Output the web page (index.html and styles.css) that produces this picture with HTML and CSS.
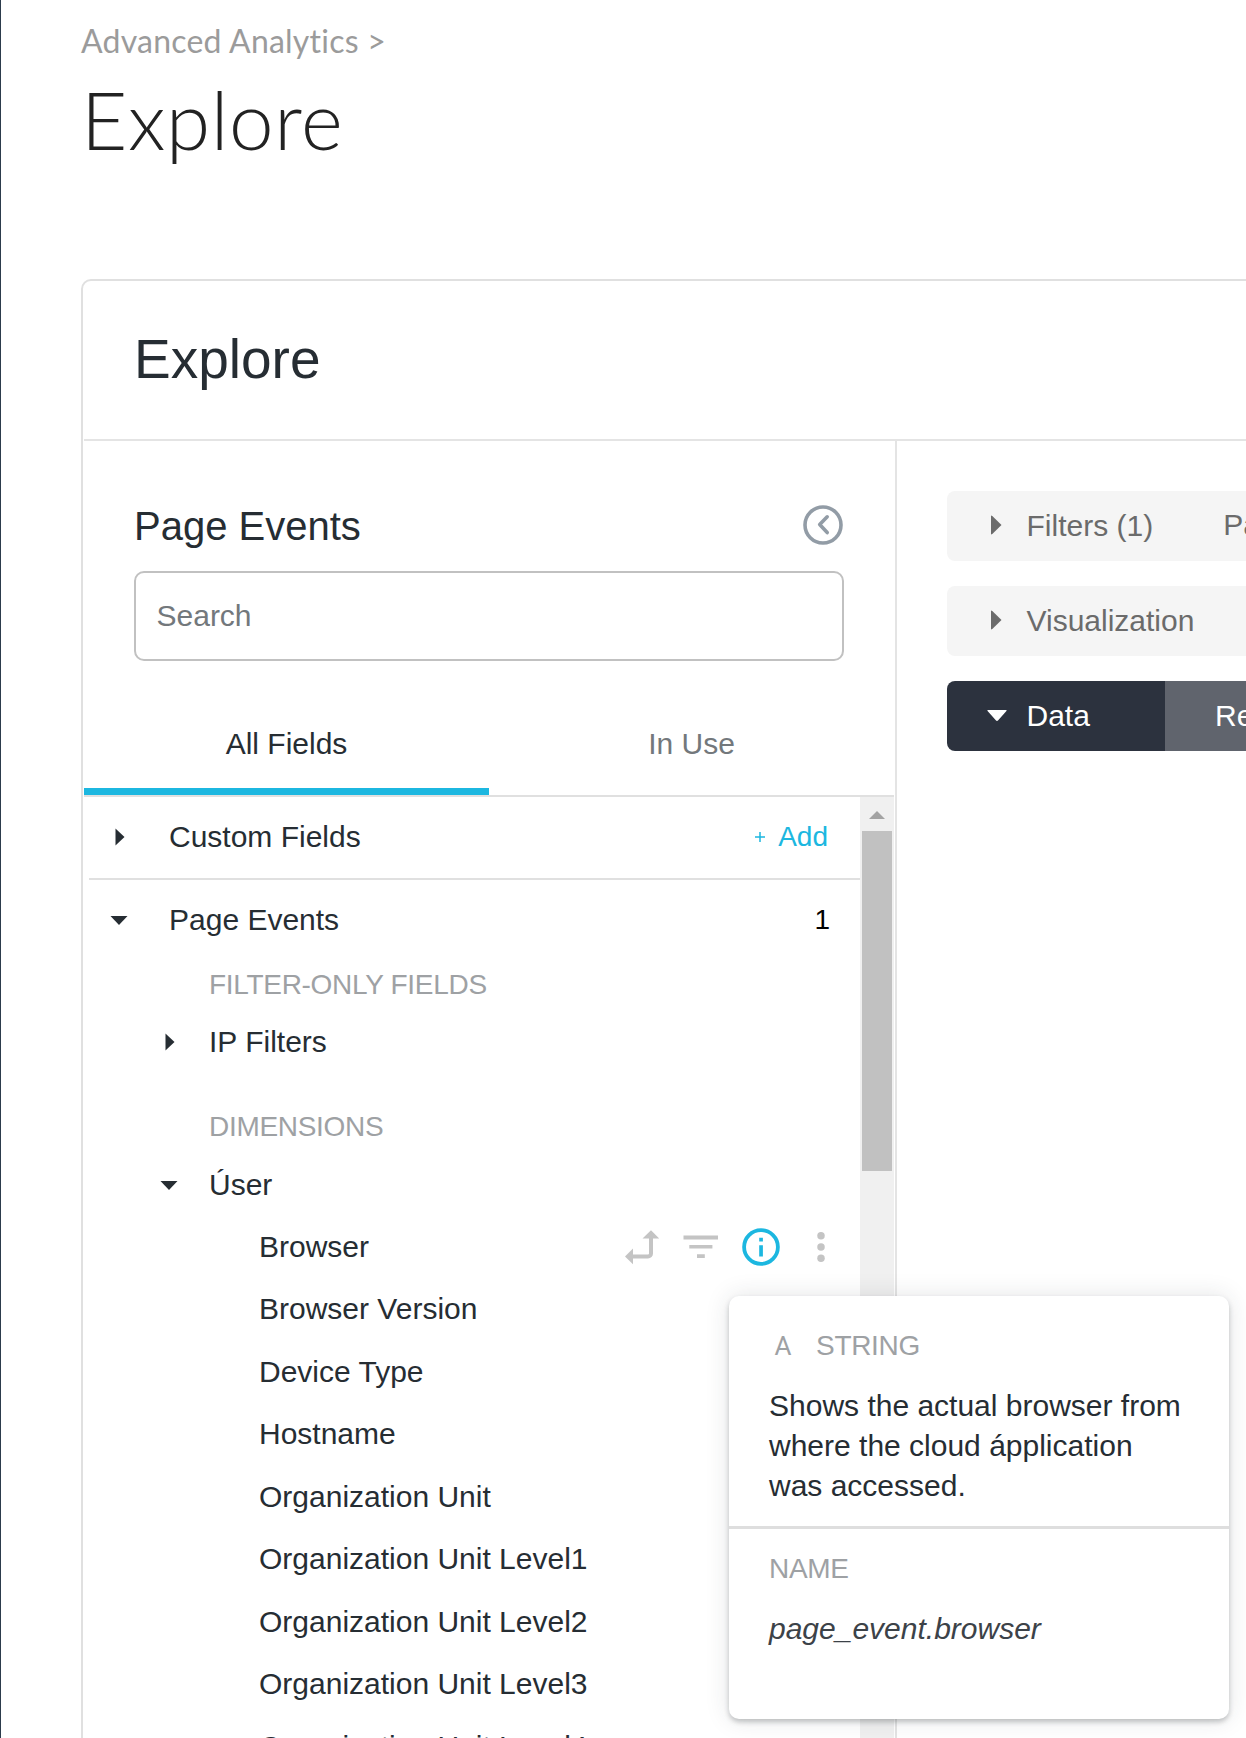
FILE: index.html
```html
<!DOCTYPE html>
<html lang="en">
<head>
<meta charset="utf-8">
<title>Explore</title>
<link rel="stylesheet" href="styles.css">
</head>
<body>
<div class="page">
  <nav class="breadcrumb">Advanced Analytics &gt;</nav>
  <h1 class="title">Explore</h1>
  <main class="card">
    <header class="card-header"><h2>Explore</h2></header>
    <div class="columns">
      <aside class="picker">
        <div class="picker-head">
          <h3>Page Events</h3>
          <svg class="collapse" width="40" height="40" viewBox="0 0 40 40"><circle cx="20" cy="20" r="18"/><path d="M24.200 11.800L16.700 19.600L24.200 27.600"/></svg>
        </div>
        <div class="search">Search</div>
        <div class="tabs">
          <div class="tab active">All Fields</div>
          <div class="tab">In Use</div>
        </div>
        <div class="scroll">
          <div class="tree">
            <div class="row custom">
              <svg class="caret" width="18" height="18" viewBox="0 0 18 18"><path d="M5.500 .5L14.500 9L5.500 17.5z"/></svg>
              <span>Custom Fields</span>
              <span class="add"><svg width="10" height="10" viewBox="0 0 10 10"><path d="M0 5H10M5 0V10"/></svg>Add</span>
            </div>
            <div class="row view">
              <svg class="caret" width="18" height="18" viewBox="0 0 18 18"><path d="M.5 5H17.5L9 14z"/></svg>
              <span>Page Events</span>
              <span class="count">1</span>
            </div>
            <div class="group">FILTER-ONLY FIELDS</div>
            <div class="row sub">
              <svg class="caret" width="18" height="18" viewBox="0 0 18 18"><path d="M5.500 .5L14.500 9L5.500 17.5z"/></svg>
              <span>IP Filters</span>
            </div>
            <div class="group dims">DIMENSIONS</div>
            <div class="row sub">
              <svg class="caret" width="18" height="18" viewBox="0 0 18 18"><path d="M.5 5H17.5L9 14z"/></svg>
              <span>Úser</span>
            </div>
            <div class="row field">
              <span>Browser</span>
              <div class="actions">
                <svg width="36" height="36" viewBox="0 0 36 36"><path d="M27 9V24.5a3 3 0 0 1-3 3H9" fill="none" stroke="#c4c4c4" stroke-width="4"/><path d="M18.5 9.5L27 1.2L35.2 9.5zM9 19.5V35.2L1 27.4z"/></svg>
                <svg width="36" height="36" viewBox="0 0 36 36"><path d="M.5 6.5H35v4H.5zM6.3 16H29.4v3.6H6.3zM14 25.2H21.8v3.9H14z"/></svg>
                <svg class="info" width="38" height="38" viewBox="0 0 38 38"><circle cx="19" cy="19" r="16.9"/><path d="M17.2 9.8h3.7v3.7h-3.7zM17.2 17.2h3.7v11.2h-3.7z"/></svg>
                <svg class="more" width="8" height="36" viewBox="0 0 8 36"><circle cx="4" cy="6.8" r="3.75"/><circle cx="4" cy="18" r="3.75"/><circle cx="4" cy="29.3" r="3.75"/></svg>
              </div>
            </div>
            <div class="row field">Browser Version</div>
            <div class="row field">Device Type</div>
            <div class="row field">Hostname</div>
            <div class="row field">Organization Unit</div>
            <div class="row field">Organization Unit Level1</div>
            <div class="row field">Organization Unit Level2</div>
            <div class="row field">Organization Unit Level3</div>
            <div class="row field">Organization Unit Level4</div>
          </div>
          <div class="scrollbar">
            <svg width="34" height="34" viewBox="0 0 34 34"><path d="M9 22L17 14L25 22z"/></svg>
            <div class="thumb"></div>
          </div>
        </div>
      </aside>
      <section class="content">
        <div class="bar">
          <svg width="20" height="20" viewBox="0 0 20 20"><path d="M4 1.500Q4 0 5.300 1L14.500 10L5.300 19Q4 20 4 18.500z"/></svg>
          <span>Filters (1)</span>
          <span class="summary">Page Event Date</span>
        </div>
        <div class="bar">
          <svg width="20" height="20" viewBox="0 0 20 20"><path d="M4 1.500Q4 0 5.300 1L14.500 10L5.300 19Q4 20 4 18.500z"/></svg>
          <span>Visualization</span>
        </div>
        <div class="bar dark">
          <div class="data-tab">
            <svg width="20" height="20" viewBox="0 0 20 20"><path d="M1.500 5Q-.500 5 .800 6.300L8.800 15.300Q10 16.500 11.200 15.300L19.200 6.300Q20.500 5 18.500 5z"/></svg>
            <span>Data</span>
          </div>
          <div class="results-tab">Results</div>
        </div>
      </section>
    </div>
  </main>
  <div class="tooltip">
    <div class="tip-top">
      <div class="type"><span class="type-icon">A</span>STRING</div>
      <p>Shows the actual browser from where the cloud ápplication was accessed.</p>
    </div>
    <div class="tip-bottom">
      <div class="label">NAME</div>
      <div class="name">page_event.browser</div>
    </div>
  </div>
</div>
</body>
</html>
```

FILE: styles.css
```css
* { box-sizing: border-box; }
html { overflow: hidden; }
body {
  margin: 0;
  font: 30px/40px "Liberation Sans", Arial, sans-serif;
  color: #262d33;
  background: #fff;
}
h1, h2, h3, p { margin: 0; font-weight: 400; }
svg { flex: none; display: block; overflow: visible; }
.page {
  position: relative;
  width: 1246px;
  height: 1738px;
  overflow: hidden;
  border-left: 1px solid #2c3b4c;
  padding: 20px 0 0 80px;
  display: flex;
  flex-direction: column;
  white-space: nowrap;
}
.breadcrumb {
  flex: none;
  font: 32px/42px Lato, sans-serif;
  letter-spacing: .22px;
  color: #9b9b9b;
}
.title {
  flex: none;
  font: 300 80px/100px Lato, sans-serif;
  letter-spacing: .6px;
  color: #222;
  height: 217px;
  padding-top: 7px;
}
.card {
  flex: none;
  width: 1300px;
  height: 1500px;
  border: 2px solid #e0e0e0;
  border-radius: 10px;
  padding: 0 1px;
}
.card-header {
  height: 160px;
  border-bottom: 2px solid #e4e4e4;
  padding: 0 50px 3px;
  display: flex;
  align-items: center;
}
.card-header h2 { font-size: 55px; line-height: 60px; }
.columns { display: flex; height: 1340px; }
.picker {
  width: 813px;
  border-right: 2px solid #e4e4e4;
  padding-right: 1px;
  display: flex;
  flex-direction: column;
  flex: none;
}
.picker-head {
  height: 130px;
  padding: 40px 51px 0 50px;
  display: flex;
  justify-content: space-between;
  align-items: center;
}
.picker-head h3 { font-size: 40px; line-height: 46px; }
.collapse { margin-bottom: 2px; }
.collapse circle, .collapse path { fill: none; stroke: #929ca6; stroke-width: 3.6; }
.collapse path { stroke-linecap: round; stroke-linejoin: round; }
.search {
  flex: none;
  height: 90px;
  margin: 0 50px;
  border: 2px solid #c1c1c1;
  border-radius: 10px;
  padding: 0 20.5px;
  line-height: 86px;
  color: #73787c;
}
.tabs {
  flex: none;
  display: flex;
  height: 136px;
  border-bottom: 2px solid #e0e0e0;
}
.tab {
  flex: 1;
  padding-top: 63px;
  text-align: center;
  color: #73787c;
  border-bottom: 7px solid transparent;
}
.tab.active { color: #262d33; border-color: #1cb7e0; }
.scroll { display: flex; }
.tree { width: 776px; padding-left: 5px; }
.row { display: flex; align-items: center; height: 62.6px; }
.caret { fill: #262d33; margin-right: 41px; }
.custom {
  height: 83px;
  border-bottom: 2px solid #e0e0e0;
  padding: 0 32px 2px 21px;
}
.view { height: 80px; padding: 0 30px 0 21px; }
.add, .count { margin-left: auto; font-size: 28px; }
.count { color: #000; }
.add { display: flex; align-items: center; gap: 13px; color: #1cb7e0; }
.add svg { stroke: #1cb7e0; stroke-width: 1.5; }
.group { height: 50px; line-height: 50px; padding-left: 120px; }
.group, .type, .label { font-size: 28px; letter-spacing: -.3px; color: #9ea1a4; }
.sub { padding: 2px 0 0 71px; }
.sub .caret { margin-right: 31px; }
.group.dims { margin-top: 29px; }
.group.dims + .sub { height: 64px; padding-top: 3px; }
.field { height: 62.5px; padding-left: 170px; }
.actions {
  margin: 0 35.5px 0 auto;
  display: flex;
  align-items: center;
  gap: 23px;
  fill: #c4c4c4;
}
.more { margin-left: 14px; }
.info circle { fill: none; stroke: #1cb7e0; stroke-width: 3.8; }
.info path { fill: #1cb7e0; }
.scrollbar { width: 34px; background: #f0f0f0; fill: #a3a3a3; }
.thumb { width: 30px; height: 340px; margin-left: 2px; background: #c1c1c1; }
.content { flex: 1; padding: 50px 0 0 50px; display: flex; flex-direction: column; gap: 25px; }
.bar {
  display: flex;
  align-items: center;
  height: 70px;
  background: #f5f5f5;
  border-radius: 8px;
  color: #6b6b6b;
  fill: #6b6b6b;
  padding-left: 40px;
  overflow: hidden;
}
.bar svg { margin: 0 19.5px 3px 0; }
.summary { margin-left: 70px; padding-bottom: 2px; }
.dark { padding: 0; color: #fff; fill: #fff; background: #2c323e; }
.data-tab { display: flex; align-items: center; width: 218px; padding-left: 40px; }
.results-tab { flex: 1; background: #60646d; line-height: 72px; padding-left: 50px; }
.tooltip {
  position: absolute;
  left: 728px;
  top: 1296px;
  width: 500px;
  height: 423px;
  background: #fff;
  border-radius: 10px;
  box-shadow: 0 3px 5px rgba(38, 45, 51, .26), 0 0 24px rgba(38, 45, 51, .13);
}
.tip-top { height: 233px; border-bottom: 3px solid #dedede; padding: 30px 40px 0; }
.type { display: flex; height: 40px; }
.type-icon { width: 47px; padding-left: 5.5px; font: 400 26px/41px Roboto, sans-serif; }
.tip-top p { margin-top: 20px; white-space: normal; }
.tip-bottom { padding: 20px 40px 0; }
.name { margin-top: 20px; font-style: italic; color: #3c4248; }
```
